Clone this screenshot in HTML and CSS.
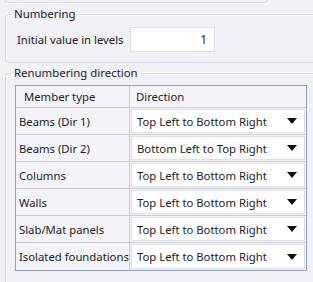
FILE: index.html
```html
<!DOCTYPE html>
<html lang="en">
<head>
    <meta charset="UTF-8">
    <title>Renumbering</title>
    <link rel="stylesheet" href="styles.css">
</head>
<body>
    <div class="prev-group"></div>

    <div class="group numbering">
        <div class="legend">Numbering</div>
        <div class="field-row">
            <label class="field-label">Initial value in levels</label>
            <input class="num-input" type="text" value="1">
        </div>
    </div>

    <div class="group renumbering">
        <div class="legend">Renumbering direction</div>
        <div class="grid">
            <div class="head">Member type</div>
            <div class="head head-dir">Direction</div>

            <div class="cell">Beams (Dir 1)</div>
            <div class="cell cell-dir"><div class="combo">Top Left to Bottom Right<span class="arrow"></span></div></div>

            <div class="cell">Beams (Dir 2)</div>
            <div class="cell cell-dir"><div class="combo">Bottom Left to Top Right<span class="arrow"></span></div></div>

            <div class="cell">Columns</div>
            <div class="cell cell-dir"><div class="combo">Top Left to Bottom Right<span class="arrow"></span></div></div>

            <div class="cell">Walls</div>
            <div class="cell cell-dir"><div class="combo">Top Left to Bottom Right<span class="arrow"></span></div></div>

            <div class="cell">Slab/Mat panels</div>
            <div class="cell cell-dir"><div class="combo">Top Left to Bottom Right<span class="arrow"></span></div></div>

            <div class="cell last">Isolated foundations</div>
            <div class="cell cell-dir last"><div class="combo">Top Left to Bottom Right<span class="arrow"></span></div></div>
        </div>
    </div>
</body>
</html>
```

FILE: styles.css
```css
body {
    margin: 0;
    background: #f0f0f5;
    font-family: 'Noto Sans', 'Segoe UI', sans-serif;
    font-size: 11.3px;
    color: #1c1c28;
    overflow: hidden;
    white-space: nowrap;
}

.prev-group {
    width: 261px;
    height: 2px;
    margin-left: 5px;
    border: 1px solid #d6d9df;
    border-top: none;
    border-radius: 0 0 4px 4px;
    box-shadow: 1px 1px 0 #fff;
}

.group {
    position: relative;
    margin-left: 5px;
    margin-right: -10px;
    border: 1px solid #d6d9df;
    border-radius: 4px;
    box-shadow: inset 1px 1px 0 #fff, 0 -1px 0 #fff;
}

.numbering {
    margin-top: 11px;
    height: 47px;
}

.renumbering {
    margin-top: 10px;
    height: 208px;
    border-bottom: none;
    border-radius: 4px 4px 0 0;
}

.legend {
    position: absolute;
    top: -9px;
    left: 6px;
    padding: 0 2px;
    line-height: 16px;
    font-size: 11.4px;
    background: #f0f0f5;
}

.field-row {
    display: flex;
    align-items: center;
    padding: 12px 0 0 11px;
}

.field-label {
    width: 113px;
}

.num-input {
    width: 85px;
    height: 25px;
    box-sizing: border-box;
    margin: 0;
    padding: 0 7px 0 0;
    border: 1px solid #dcdee4;
    background: #fff;
    font: inherit;
    font-size: 12px;
    color: #1c1c28;
    text-align: right;
    outline: none;
}

.grid {
    display: grid;
    grid-template-columns: 114px 176px;
    grid-template-rows: 22px repeat(6, 27px);
    margin: 11px 0 0 9px;
    width: 290px;
    border: 1px solid #8fa2bd;
    background: #f4f4f8;
}

.head {
    display: flex;
    align-items: center;
    padding-left: 8px;
    border-bottom: 1px solid #c9ccd6;
    border-right: 1px solid #c9ccd6;
}

.head-dir {
    padding-left: 6px;
    border-right: none;
}

.cell {
    display: flex;
    align-items: center;
    padding-left: 3px;
    border-bottom: 1px solid #c9ccd6;
    border-right: 1px solid #c9ccd6;
}

.cell.last {
    border-bottom: none;
}

.cell-dir {
    padding: 1px;
    border-right: none;
}

.combo {
    position: relative;
    flex: 1;
    height: 100%;
    box-sizing: border-box;
    display: flex;
    align-items: center;
    padding-left: 5px;
    border: 1px solid #dfe0e6;
    background: #fff;
}

.arrow {
    position: absolute;
    right: 7px;
    top: 50%;
    margin-top: -3px;
    width: 0;
    height: 0;
    border-left: 5px solid transparent;
    border-right: 5px solid transparent;
    border-top: 6px solid #111;
}
```
